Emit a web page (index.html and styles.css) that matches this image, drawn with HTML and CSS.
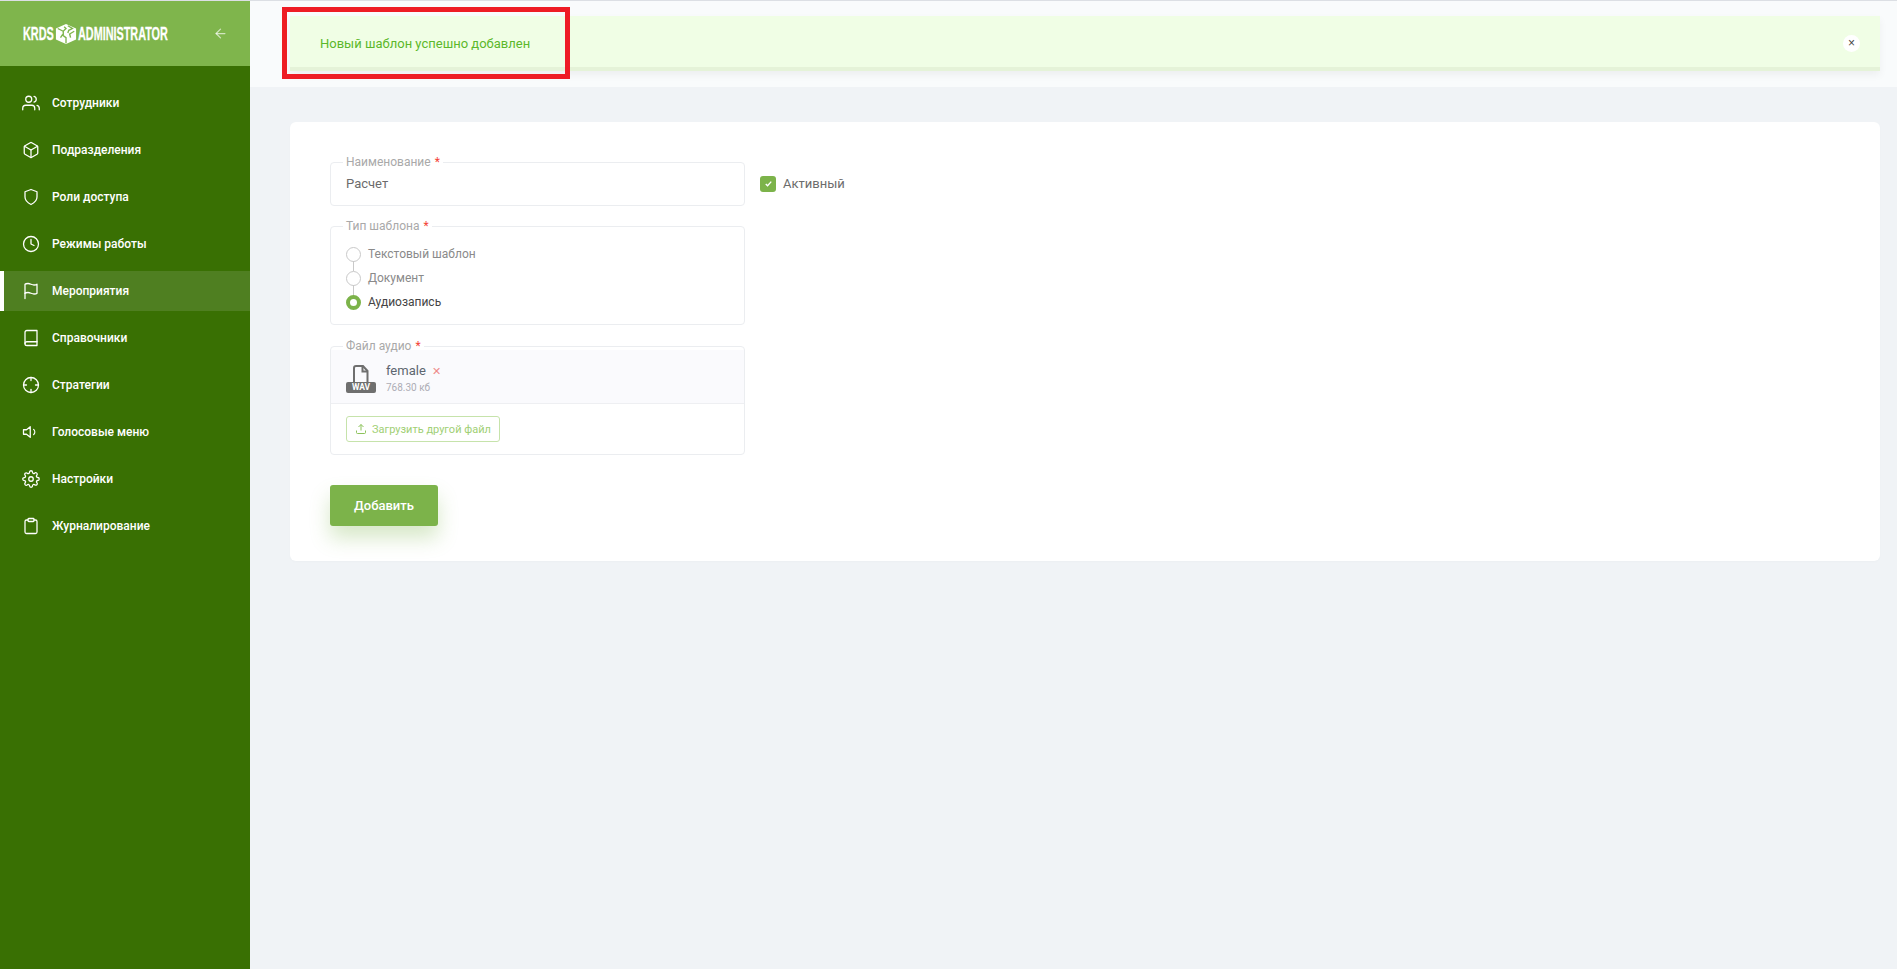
FILE: index.html
```html
<!DOCTYPE html>
<html lang="en">
<head>
    <meta charset="UTF-8">
    <meta name="viewport" content="width=device-width, initial-scale=1.0">
    <title>KRDS Administrator</title>
    <link rel="stylesheet" href="styles.css">
</head>
<body>
    <aside class="sidebar">
        <div class="sidebar-head">
            <div class="logo">
                <span class="logo-word logo-krds">KRDS</span>
                <svg class="logo-cube" viewBox="0 0 24 24">
                    <polygon points="12,1 23,6 23,18 12,23 1,18 1,6" fill="#fff"/>
                    <path d="M3 6l6 3 3-3-2-2M14 3l5 3-4 2-1 3M21 9l-5 3 1 4M12 22v-6l-4-3-2 3M9 9v4" fill="none" stroke="#7fb54c" stroke-width="1.5"/>
                </svg>
                <span class="logo-word logo-admin">ADMINISTRATOR</span>
            </div>
            <svg class="back-arrow" viewBox="0 0 24 24"><line x1="19" y1="12" x2="5" y2="12"/><polyline points="12 19 5 12 12 5"/></svg>
        </div>
        <nav class="menu">
            <a class="menu-item" href="#">
                <svg class="icon" viewBox="0 0 24 24"><path d="M17 21v-2a4 4 0 0 0-4-4H5a4 4 0 0 0-4 4v2"/><circle cx="9" cy="7" r="4"/><path d="M23 21v-2a4 4 0 0 0-3-3.87"/><path d="M16 3.13a4 4 0 0 1 0 7.75"/></svg>
                Сотрудники
            </a>
            <a class="menu-item" href="#">
                <svg class="icon" viewBox="0 0 24 24"><path d="M21 16V8a2 2 0 0 0-1-1.73l-7-4a2 2 0 0 0-2 0l-7 4A2 2 0 0 0 3 8v8a2 2 0 0 0 1 1.73l7 4a2 2 0 0 0 2 0l7-4A2 2 0 0 0 21 16z"/><polyline points="3.27 6.96 12 12.01 20.73 6.96"/><line x1="12" y1="22.08" x2="12" y2="12"/></svg>
                Подразделения
            </a>
            <a class="menu-item" href="#">
                <svg class="icon" viewBox="0 0 24 24"><path d="M12 22s8-4 8-10V5l-8-3-8 3v7c0 6 8 10 8 10z"/></svg>
                Роли доступа
            </a>
            <a class="menu-item" href="#">
                <svg class="icon" viewBox="0 0 24 24"><circle cx="12" cy="12" r="10"/><polyline points="12 6 12 12 16 14"/></svg>
                Режимы работы
            </a>
            <a class="menu-item active" href="#">
                <svg class="icon" viewBox="0 0 24 24"><path d="M4 15s1-1 4-1 5 2 8 2 4-1 4-1V3s-1 1-4 1-5-2-8-2-4 1-4 1z"/><line x1="4" y1="22" x2="4" y2="15"/></svg>
                Мероприятия
            </a>
            <a class="menu-item" href="#">
                <svg class="icon" viewBox="0 0 24 24"><path d="M4 19.5A2.5 2.5 0 0 1 6.5 17H20"/><path d="M6.5 2H20v20H6.5A2.5 2.5 0 0 1 4 19.5v-15A2.5 2.5 0 0 1 6.5 2z"/></svg>
                Справочники
            </a>
            <a class="menu-item" href="#">
                <svg class="icon" viewBox="0 0 24 24"><circle cx="12" cy="12" r="10"/><line x1="22" y1="12" x2="18" y2="12"/><line x1="6" y1="12" x2="2" y2="12"/><line x1="12" y1="6" x2="12" y2="2"/><line x1="12" y1="22" x2="12" y2="18"/></svg>
                Стратегии
            </a>
            <a class="menu-item" href="#">
                <svg class="icon" viewBox="0 0 24 24"><polygon points="11 5 6 9 2 9 2 15 6 15 11 19 11 5"/><path d="M15.54 8.46a5 5 0 0 1 0 7.07"/></svg>
                Голосовые меню
            </a>
            <a class="menu-item" href="#">
                <svg class="icon" viewBox="0 0 24 24"><circle cx="12" cy="12" r="3"/><path d="M19.4 15a1.65 1.65 0 0 0 .33 1.82l.06.06a2 2 0 0 1 0 2.83 2 2 0 0 1-2.83 0l-.06-.06a1.65 1.65 0 0 0-1.82-.33 1.65 1.65 0 0 0-1 1.51V21a2 2 0 0 1-2 2 2 2 0 0 1-2-2v-.09A1.65 1.65 0 0 0 9 19.4a1.65 1.65 0 0 0-1.82.33l-.06.06a2 2 0 0 1-2.83 0 2 2 0 0 1 0-2.83l.06-.06a1.65 1.65 0 0 0 .33-1.82 1.65 1.65 0 0 0-1.51-1H3a2 2 0 0 1-2-2 2 2 0 0 1 2-2h.09A1.65 1.65 0 0 0 4.6 9a1.65 1.65 0 0 0-.33-1.82l-.06-.06a2 2 0 0 1 0-2.83 2 2 0 0 1 2.83 0l.06.06a1.65 1.65 0 0 0 1.82.33H9a1.65 1.65 0 0 0 1-1.51V3a2 2 0 0 1 2-2 2 2 0 0 1 2 2v.09a1.65 1.65 0 0 0 1 1.51 1.65 1.65 0 0 0 1.82-.33l.06-.06a2 2 0 0 1 2.83 0 2 2 0 0 1 0 2.83l-.06.06a1.65 1.65 0 0 0-.33 1.82V9a1.65 1.65 0 0 0 1.51 1H21a2 2 0 0 1 2 2 2 2 0 0 1-2 2h-.09a1.65 1.65 0 0 0-1.51 1z"/></svg>
                Настройки
            </a>
            <a class="menu-item" href="#">
                <svg class="icon" viewBox="0 0 24 24"><path d="M16 4h2a2 2 0 0 1 2 2v14a2 2 0 0 1-2 2H6a2 2 0 0 1-2-2V6a2 2 0 0 1 2-2h2"/><rect x="8" y="2" width="8" height="4" rx="1" ry="1"/></svg>
                Журналирование
            </a>
        </nav>
    </aside>

    <main class="main">
        <div class="topbar">
            <div class="alert">
                <span>Новый шаблон успешно добавлен</span>
                <button class="alert-close">×</button>
            </div>
        </div>
        <div class="highlight"></div>

        <div class="content">
            <form class="card">
                <div class="row">
                    <fieldset class="field">
                        <legend>Наименование <b>*</b></legend>
                        <div class="field-value">Расчет</div>
                    </fieldset>
                    <label class="checkbox">
                        <span class="checkbox-box">
                            <svg viewBox="0 0 24 24"><polyline points="6 13 10 17 18 8"/></svg>
                        </span>
                        Активный
                    </label>
                </div>

                <fieldset class="field">
                    <legend>Тип шаблона <b>*</b></legend>
                    <div class="radio-group">
                        <label class="radio"><span class="radio-mark"></span>Текстовый шаблон</label>
                        <label class="radio"><span class="radio-mark"></span>Документ</label>
                        <label class="radio checked"><span class="radio-mark"></span>Аудиозапись</label>
                    </div>
                </fieldset>

                <fieldset class="field">
                    <legend>Файл аудио <b>*</b></legend>
                    <div class="file-row">
                        <div class="file-icon">
                            <svg viewBox="0 0 30 17"><path d="M8 17V3a2 2 0 0 1 2-2h7l4.500 5V17"/><path d="M16.500 1v5.500h5"/></svg>
                            <span>WAV</span>
                        </div>
                        <div>
                            <div class="file-name">female <span class="file-remove">✕</span></div>
                            <div class="file-size">768.30 кб</div>
                        </div>
                    </div>
                    <div class="file-actions">
                        <button type="button" class="btn-upload">
                            <svg viewBox="0 0 24 24"><path d="M21 15v4a2 2 0 0 1-2 2H5a2 2 0 0 1-2-2v-4"/><polyline points="17 8 12 3 7 8"/><line x1="12" y1="3" x2="12" y2="15"/></svg>
                            Загрузить другой файл
                        </button>
                    </div>
                </fieldset>

                <button type="button" class="btn-submit">Добавить</button>
            </form>
        </div>
    </main>
</body>
</html>
```

FILE: styles.css
```css
* {
    box-sizing: border-box;
    margin: 0;
    padding: 0;
}
html, body {
    height: 100%;
}
body {
    font-family: Roboto, Arial, sans-serif;
    font-size: 13px;
    background-color: #f0f3f6;
    display: flex;
    overflow: hidden;
    border-top: 1px solid #dcdfe4;
}

/* sidebar */
.sidebar {
    width: 250px;
    flex-shrink: 0;
    background: #397003;
}
.sidebar-head {
    height: 65px;
    background: #7fb54c;
    display: flex;
    align-items: center;
    justify-content: space-between;
    padding: 0 22px 0 23px;
}
.logo {
    display: flex;
    align-items: center;
    gap: 1px;
    color: #fff;
    font-family: "Liberation Sans", Arial, sans-serif;
    font-weight: 700;
    font-size: 19px;
    line-height: 22px;
}
.logo-word {
    display: block;
    white-space: nowrap;
    -webkit-text-stroke: 0.3px #fff;
    transform: scaleX(0.57);
    transform-origin: left center;
}
.logo-krds {
    width: 31px;
}
.logo-admin {
    width: 94px;
}
.logo-cube {
    width: 22px;
    height: 22px;
}
.back-arrow {
    width: 15px;
    height: 15px;
    fill: none;
    stroke: rgba(255, 255, 255, 0.65);
    stroke-width: 2;
    stroke-linecap: round;
    stroke-linejoin: round;
}
.menu {
    padding-top: 17px;
    display: flex;
    flex-direction: column;
    gap: 7px;
}
.menu-item {
    height: 40px;
    display: flex;
    align-items: center;
    gap: 12px;
    padding-left: 18px;
    padding-bottom: 1px;
    border-left: 4px solid transparent;
    color: #fff;
    font-size: 12px;
    font-weight: 500;
    text-decoration: none;
}
.menu-item.active {
    background: #4f7f21;
    border-left-color: #fff;
}
.icon {
    width: 18px;
    height: 18px;
    flex-shrink: 0;
    fill: none;
    stroke: #fff;
    stroke-width: 1.7;
    stroke-linecap: round;
    stroke-linejoin: round;
}

/* main */
.main {
    flex: 1;
    min-width: 0;
    position: relative;
}
.topbar {
    background: #f9fbfc;
    padding: 15px 17px 16px 40px;
}
.alert {
    height: 55px;
    background: #f0fee5;
    border-bottom: 4px solid #e5f3d8;
    box-shadow: 0 4px 8px rgba(0, 0, 0, 0.05);
    color: #5cb82b;
    display: flex;
    align-items: center;
    justify-content: space-between;
    padding: 4px 20px 0 30px;
}
.alert-close {
    width: 17px;
    height: 17px;
    border: none;
    border-radius: 50%;
    background: #fff;
    color: #444;
    font-size: 12px;
    line-height: 17px;
}
.highlight {
    position: absolute;
    left: 32px;
    top: 6px;
    width: 288px;
    height: 72px;
    border: 5px solid #ee1c25;
}
.content {
    padding: 35px 17px 0 40px;
}
.card {
    height: 439px;
    background: #fff;
    border-radius: 6px;
    padding: 36px 40px 0;
    box-shadow: 0 1px 3px rgba(0, 0, 0, 0.02);
}
.row {
    display: flex;
    align-items: center;
    gap: 15px;
}

/* fieldsets */
.field {
    width: 415px;
    border: 1px solid #ebedf0;
    border-radius: 4px;
    margin-bottom: 17px;
    min-width: 0;
}
.row .field {
    margin-bottom: 0;
}
.row + .field {
    margin-top: 16px;
}
.field legend {
    margin-left: 12px;
    padding: 0 3px;
    font-size: 12px;
    line-height: 8px;
    color: #a9a9a9;
}
.field legend b {
    color: #f44336;
    font-weight: 400;
    margin-left: 1px;
}
.field-value {
    height: 39px;
    padding: 8px 15px 0;
    color: #6c6c6c;
    line-height: 20px;
}
.checkbox {
    display: flex;
    align-items: center;
    gap: 7px;
    padding-top: 3px;
    color: #6c6c6c;
}
.checkbox-box {
    width: 16px;
    height: 16px;
    border-radius: 3px;
    background: #7cb34a;
    display: flex;
    align-items: center;
    justify-content: center;
}
.checkbox-box svg {
    width: 11px;
    height: 11px;
    fill: none;
    stroke: #fff;
    stroke-width: 3;
}

/* radios */
.radio-group {
    padding: 12px 15px 10px;
}
.radio {
    height: 24px;
    display: flex;
    align-items: center;
    gap: 7px;
    font-size: 12px;
    color: #8a8a8a;
}
.radio.checked {
    color: #444;
}
.radio-mark {
    width: 15px;
    height: 15px;
    border: 1px solid #c9c9c9;
    border-radius: 50%;
    background: #fff;
    position: relative;
}
.radio:not(:last-child) .radio-mark::after {
    content: "";
    position: absolute;
    left: 6px;
    top: 13px;
    width: 1px;
    height: 10px;
    background: #c9c9c9;
}
.radio.checked .radio-mark {
    border: 4px solid #7cb34a;
}

/* file */
.file-row {
    height: 54px;
    background: #fafafd;
    border-bottom: 1px solid #eeeff2;
    display: flex;
    align-items: center;
    gap: 10px;
    padding: 4px 15px 0;
}
.file-icon {
    width: 30px;
    height: 28px;
    display: flex;
    flex-direction: column;
    align-items: center;
}
.file-icon svg {
    width: 30px;
    height: 17px;
    fill: none;
    stroke: #6f6f6f;
    stroke-width: 2;
    flex-shrink: 0;
}
.file-icon span {
    width: 30px;
    height: 11px;
    background: #6f6f6f;
    border-radius: 2px;
    color: #fff;
    font-size: 8.5px;
    font-weight: 700;
    line-height: 11px;
    text-align: center;
}
.file-name {
    color: #5d6670;
    line-height: 16px;
}
.file-remove {
    color: #ee8a8a;
    font-size: 11px;
    margin-left: 3px;
}
.file-size {
    margin-top: 2px;
    color: #adadb5;
    font-size: 10px;
    line-height: 12px;
}
.file-actions {
    padding: 12px 15px;
}
.btn-upload {
    height: 26px;
    padding: 0 8px;
    display: flex;
    align-items: center;
    gap: 5px;
    background: #fff;
    border: 1px solid #c6e3ab;
    border-radius: 3px;
    color: #a0cf74;
    font-family: inherit;
    font-size: 11px;
}
.btn-upload svg {
    width: 12px;
    height: 12px;
    fill: none;
    stroke: #8cc35a;
    stroke-width: 2;
}
.btn-submit {
    width: 108px;
    height: 41px;
    margin-top: 13px;
    background: #7cb34a;
    border: none;
    border-radius: 3px;
    color: #fff;
    font-family: inherit;
    font-size: 13px;
    font-weight: 500;
    box-shadow: 0 12px 20px rgba(124, 179, 74, 0.3);
}
```
